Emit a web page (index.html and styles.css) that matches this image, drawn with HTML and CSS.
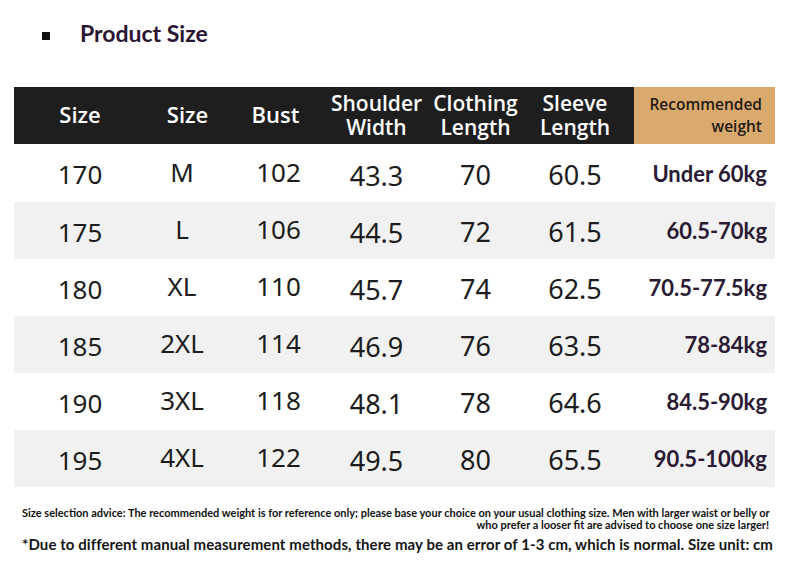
FILE: index.html
```html
<!DOCTYPE html>
<html lang="en">
<head>
<meta charset="utf-8">
<title>Product Size</title>
<link rel="stylesheet" href="styles.css">
</head>
<body>
<div class="page">
  <div class="title-row">
    <span class="bullet"></span>
    <h1 class="title">Product Size</h1>
  </div>

  <div class="table">
    <div class="row head">
      <div class="cell c1 one">Size</div>
      <div class="cell c2 one">Size</div>
      <div class="cell c3 one">Bust</div>
      <div class="cell c4 two">Shoulder<br>Width</div>
      <div class="cell c5 two">Clothing<br>Length</div>
      <div class="cell c6 two">Sleeve<br>Length</div>
      <div class="cell c7 rec">Recommended<br>weight</div>
    </div>
    <div class="row body first">
      <div class="cell c1">170</div><div class="cell c2">M</div><div class="cell c3">102</div><div class="cell c4">43.3</div><div class="cell c5">70</div><div class="cell c6">60.5</div><div class="cell c7 w">Under 60kg</div>
    </div>
    <div class="row body alt">
      <div class="cell c1">175</div><div class="cell c2">L</div><div class="cell c3">106</div><div class="cell c4">44.5</div><div class="cell c5">72</div><div class="cell c6">61.5</div><div class="cell c7 w">60.5-70kg</div>
    </div>
    <div class="row body">
      <div class="cell c1">180</div><div class="cell c2">XL</div><div class="cell c3">110</div><div class="cell c4">45.7</div><div class="cell c5">74</div><div class="cell c6">62.5</div><div class="cell c7 w">70.5-77.5kg</div>
    </div>
    <div class="row body alt">
      <div class="cell c1">185</div><div class="cell c2">2XL</div><div class="cell c3">114</div><div class="cell c4">46.9</div><div class="cell c5">76</div><div class="cell c6">63.5</div><div class="cell c7 w">78-84kg</div>
    </div>
    <div class="row body">
      <div class="cell c1">190</div><div class="cell c2">3XL</div><div class="cell c3">118</div><div class="cell c4">48.1</div><div class="cell c5">78</div><div class="cell c6">64.6</div><div class="cell c7 w">84.5-90kg</div>
    </div>
    <div class="row body alt">
      <div class="cell c1">195</div><div class="cell c2">4XL</div><div class="cell c3">122</div><div class="cell c4">49.5</div><div class="cell c5">80</div><div class="cell c6">65.5</div><div class="cell c7 w">90.5-100kg</div>
    </div>
  </div>

  <div class="notes">
    <p class="advice">Size selection advice: The recommended weight is for reference only; please base your choice on your usual clothing size. Men with larger waist or belly or</p>
    <p class="advice right">who prefer a looser fit are advised to choose one size larger!</p>
    <p class="error">*Due to different manual measurement methods, there may be an error of 1-3 cm, which is normal. Size unit: cm</p>
  </div>
</div>
</body>
</html>
```

FILE: styles.css
```css
html, body {
  margin: 0;
  padding: 0;
  background: #ffffff;
}

.page {
  width: 790px;
  height: 582px;
  overflow: hidden;
  font-family: "Noto Sans", "Open Sans", sans-serif;
  color: #1c1c1c;
}

.title-row {
  display: flex;
  align-items: center;
  padding: 19px 0 0 42px;
  height: 28px;
}

.bullet {
  width: 8px;
  height: 8px;
  background: #111;
  margin-top: 5px;
  margin-right: 30px;
}

.title {
  margin: 0;
  font-family: "Lato", sans-serif;
  font-weight: 700;
  font-size: 23px;
  line-height: 28px;
  color: #2a1532;
}

.table {
  margin: 40px 0 0 14px;
  width: 761px;
}

.row {
  display: grid;
  grid-template-columns: 117px 99px 97px 99px 99px 109px 141px;
  height: 57px;
}

.row.first {
  height: 58px;
}

.cell {
  display: flex;
  align-items: center;
  justify-content: center;
  text-align: center;
}

.head {
  background: #1e1e1e;
  color: #ffffff;
  font-family: "Open Sans", sans-serif;
  font-weight: 600;
  font-size: 22px;
  line-height: 28px;
}

.head .one {
  padding-bottom: 4px;
}

.head .two {
  flex-direction: column;
  font-size: 21px;
  line-height: 24px;
  padding-bottom: 2px;
}

.head .c2 {
  padding-left: 14px;
}

.head .c3 {
  padding-right: 6px;
}

.head .rec {
  flex-direction: column;
  align-items: flex-end;
  background: #daa96e;
  color: #231a14;
  font-size: 15.5px;
  line-height: 22px;
  text-align: right;
  padding-right: 13px;
  padding-bottom: 2px;
}

.body {
  background: #ffffff;
  font-size: 26px;
  font-weight: 400;
}

.body.alt {
  background: #f1f1f1;
}

.c1 {
  padding-left: 15px;
}

.body .c1 {
  font-size: 26px;
  padding-top: 2px;
}

.body .c2 {
  padding-left: 3px;
  padding-bottom: 3px;
}

.body .c3 {
  padding-bottom: 3px;
}

.body .c4 {
  padding-top: 4px;
  font-size: 27px;
}

.body .c5,
.body .c6 {
  padding-top: 2px;
  font-size: 27px;
}

.c6 {
  padding-right: 9px;
}

.body .w {
  justify-content: flex-end;
  padding-right: 8px;
  font-family: "Lato", sans-serif;
  font-weight: 700;
  font-size: 22px;
  color: #2a1a33;
}

.notes {
  padding: 0 21px 0 22px;
  margin-top: 20px;
  font-family: "Lato", sans-serif;
  color: #111111;
}

.notes p {
  margin: 0;
}

.advice {
  font-size: 11px;
  line-height: 12px;
  font-weight: 700;
  white-space: nowrap;
}

.advice.right {
  text-align: right;
}

.error {
  margin-top: 4px !important;
  font-size: 15px;
  line-height: 18px;
  font-weight: 700;
  letter-spacing: 0.08px;
  white-space: nowrap;
  color: #151515;
}
```
